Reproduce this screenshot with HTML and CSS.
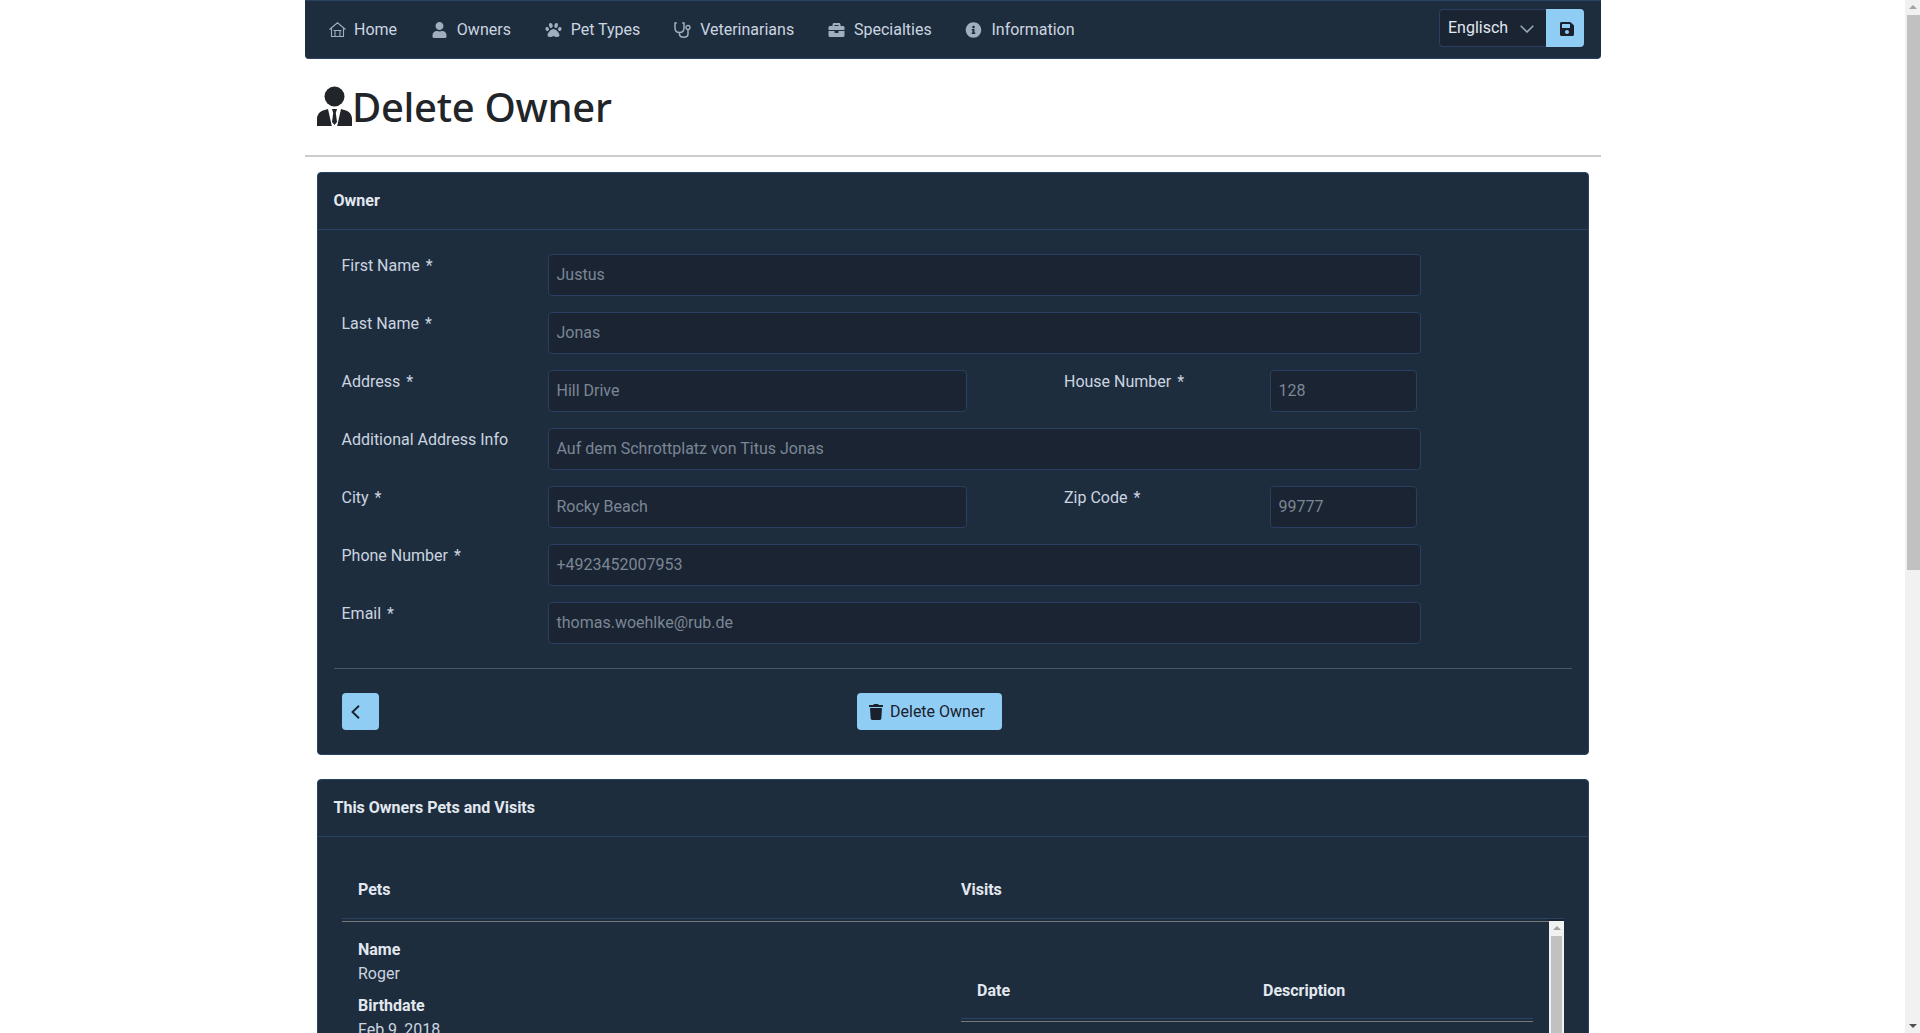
FILE: index.html
```html
<!DOCTYPE html>
<html>
  <head>
    <meta http-equiv="Content-Type" content="text/html;charset=UTF-8">
    <title>Delete Owner</title>
    <link rel="stylesheet" href="styles.css">
  </head>
  <body>
    <div class="container">
      <!-- navbar -->
      <nav class="navbar">
        <ul class="nav-list">
          <li class="nav-item nav-home">
            <svg class="nav-icon" viewBox="0 0 17 15"><path d="M.5 7.500 8.500.8l8 6.700M2.500 6v8.500h12V6M6 14.500v-6h5v6M4.500 8.500h8" fill="none" stroke="currentColor" stroke-width="1.100"/></svg>
            <span>Home</span>
          </li>
          <li class="nav-item nav-owners">
            <svg class="nav-icon" viewBox="0 0 448 512"><path fill="currentColor" d="M224 256c70.7 0 128-57.3 128-128S294.7 0 224 0 96 57.3 96 128s57.3 128 128 128zm89.6 32h-16.7c-22.2 10.2-46.9 16-72.9 16s-50.6-5.8-72.9-16h-16.7C60.2 288 0 348.2 0 422.4V464c0 26.5 21.5 48 48 48h352c26.5 0 48-21.5 48-48v-41.6c0-74.2-60.2-134.4-134.4-134.4z"/></svg>
            <span>Owners</span>
          </li>
          <li class="nav-item nav-pets">
            <svg class="nav-icon" viewBox="0 0 512 512"><path fill="currentColor" d="M256 224c-79.41 0-192 122.76-192 200.25 0 34.9 26.81 55.75 71.74 55.75 48.84 0 81.09-25.08 120.26-25.08 39.51 0 71.85 25.08 120.26 25.08 44.93 0 71.74-20.85 71.74-55.75C448 346.76 335.41 224 256 224zm-147.28-12.61c-10.4-34.65-42.44-57.09-71.56-50.13-29.12 6.96-44.29 40.69-33.89 75.34 10.4 34.65 42.44 57.09 71.56 50.13 29.12-6.96 44.29-40.69 33.89-75.34zm84.72-20.78c30.94-8.14 46.42-49.94 34.58-93.36s-46.52-72.01-77.46-63.87-46.42 49.94-34.58 93.36c11.84 43.42 46.52 72.02 77.46 63.87zm281.39-29.34c-29.12-6.96-61.15 15.48-71.56 50.13-10.4 34.65 4.77 68.38 33.89 75.34 29.12 6.96 61.15-15.48 71.56-50.13 10.4-34.65-4.77-68.38-33.89-75.34zm-156.27 29.34c30.94 8.14 65.62-20.45 77.46-63.87 11.84-43.42-3.64-85.21-34.58-93.36s-65.62 20.45-77.46 63.87c-11.84 43.42 3.64 85.22 34.58 93.36z"/></svg>
            <span>Pet Types</span>
          </li>
          <li class="nav-item nav-vets">
            <svg class="nav-icon" viewBox="0 0 17 16"><path d="M2.800.9H1v5.100c0 2.800 2 4.500 4.500 4.500s4.500-1.700 4.500-4.500V.9H8.200M5.500 10.500V12c0 2 1.700 3.200 4.200 3.200s4.300-1.200 4.300-3.200V7.500" fill="none" stroke="currentColor" stroke-width="1.500"/><circle cx="14" cy="5.500" r="2" fill="none" stroke="currentColor" stroke-width="1.300"/></svg>
            <span>Veterinarians</span>
          </li>
          <li class="nav-item nav-spec">
            <svg class="nav-icon" viewBox="0 0 512 512"><path fill="currentColor" d="M320 336c0 8.84-7.16 16-16 16h-96c-8.84 0-16-7.16-16-16v-48H0v144c0 25.6 22.4 48 48 48h416c25.6 0 48-22.4 48-48V288H320v48zm144-208h-80V80c0-25.6-22.4-48-48-48H176c-25.6 0-48 22.4-48 48v48H48c-25.6 0-48 22.4-48 48v80h512v-80c0-25.6-22.4-48-48-48zm-144 0H192V96h128v32z"/></svg>
            <span>Specialties</span>
          </li>
          <li class="nav-item nav-info">
            <svg class="nav-icon" viewBox="0 0 512 512"><path fill="currentColor" d="M256 8C119.043 8 8 119.083 8 256c0 136.997 111.043 248 248 248s248-111.003 248-248C504 119.083 392.957 8 256 8zm0 110c23.196 0 42 18.804 42 42s-18.804 42-42 42-42-18.804-42-42 18.804-42 42-42zm56 254c0 6.627-5.373 12-12 12h-88c-6.627 0-12-5.373-12-12v-24c0-6.627 5.373-12 12-12h12v-64h-12c-6.627 0-12-5.373-12-12v-24c0-6.627 5.373-12 12-12h64c6.627 0 12 5.373 12 12v100h12c6.627 0 12 5.373 12 12v24z"/></svg>
            <span>Information</span>
          </li>
        </ul>
        <div class="lang">
          <div class="lang-select">
            <span>Englisch</span>
            <svg class="lang-chevron" viewBox="0 0 14 8"><path d="M.7.7 7 7 13.300.7" fill="none" stroke="currentColor" stroke-width="1.500"/></svg>
          </div>
          <div class="btn btn-save">
            <svg class="save-icon" viewBox="0 0 448 512"><path fill="currentColor" d="M433.941 129.941l-83.882-83.882A48 48 0 0 0 316.118 32H48C21.49 32 0 53.49 0 80v352c0 26.51 21.49 48 48 48h352c26.51 0 48-21.49 48-48V163.882a48 48 0 0 0-14.059-33.941zM224 416c-35.346 0-64-28.654-64-64 0-35.346 28.654-64 64-64s64 28.654 64 64c0 35.346-28.654 64-64 64zm96-304.520V212c0 6.627-5.373 12-12 12H76c-6.627 0-12-5.373-12-12V108c0-6.627 5.373-12 12-12h228.520c3.183 0 6.235 1.264 8.485 3.515l3.480 3.480A11.996 11.996 0 0 1 320 111.480z"/></svg>
          </div>
        </div>
      </nav>

      <!-- title -->
      <div class="title">
        <svg class="title-icon" viewBox="0 0 35 40"><circle cx="17.500" cy="10.500" r="10" fill="currentColor"/><path fill="currentColor" d="M0 40v-7c0-4.500 2.800-7.300 6-8.500l5-1.500 3.800 17zM35 40v-7c0-4.500-2.800-7.300-6-8.500L24 23l-3.800 17zM15 23h5l-1.200 4 1.200 9-2.500 3-2.500-3 1.200-9z"/></svg>
        <h1>Delete Owner</h1>
      </div>

      <div class="content">
        <!-- owner card -->
        <section class="card card-owner">
          <div class="card-header">Owner</div>
          <div class="card-body">
            <div class="form-row">
              <label class="form-label">First Name <i>*</i></label>
              <div class="form-control wide">Justus</div>
            </div>
            <div class="form-row">
              <label class="form-label">Last Name <i>*</i></label>
              <div class="form-control wide">Jonas</div>
            </div>
            <div class="form-row">
              <label class="form-label">Address <i>*</i></label>
              <div class="form-control half">Hill Drive</div>
              <label class="form-label second">House Number <i>*</i></label>
              <div class="form-control small">128</div>
            </div>
            <div class="form-row">
              <label class="form-label">Additional Address Info</label>
              <div class="form-control wide">Auf dem Schrottplatz von Titus Jonas</div>
            </div>
            <div class="form-row">
              <label class="form-label">City <i>*</i></label>
              <div class="form-control half">Rocky Beach</div>
              <label class="form-label second">Zip Code <i>*</i></label>
              <div class="form-control small">99777</div>
            </div>
            <div class="form-row">
              <label class="form-label">Phone Number <i>*</i></label>
              <div class="form-control wide">+4923452007953</div>
            </div>
            <div class="form-row">
              <label class="form-label">Email <i>*</i></label>
              <div class="form-control wide">thomas.woehlke@rub.de</div>
            </div>
            <hr class="card-rule">
            <div class="actions">
              <div class="btn btn-back">
                <svg class="back-icon" viewBox="0 0 9 14"><path d="M8 .8 1.500 7 8 13.200" fill="none" stroke="currentColor" stroke-width="1.900"/></svg>
              </div>
              <div class="btn btn-delete">
                <svg class="trash-icon" viewBox="0 0 448 512"><path fill="currentColor" d="M432 32H312l-9.400-18.700A24 24 0 0 0 281.100 0H166.800a23.720 23.720 0 0 0-21.400 13.300L136 32H16A16 16 0 0 0 0 48v32a16 16 0 0 0 16 16h416a16 16 0 0 0 16-16V48a16 16 0 0 0-16-16zM53.200 467a48 48 0 0 0 47.900 45h245.800a48 48 0 0 0 47.900-45L416 128H32z"/></svg>
                <span>Delete Owner</span>
              </div>
            </div>
          </div>
        </section>

        <!-- pets card, runs past the bottom of the window -->
        <section class="card card-pets">
          <div class="card-header">This Owners Pets and Visits</div>
          <div class="card-body pets-body">
            <div class="table-head">
              <div class="col-pets">Pets</div>
              <div class="col-visits">Visits</div>
            </div>
            <div class="table-body">
              <div class="pets-cell">
                <div class="dt">Name</div>
                <div class="dd">Roger</div>
                <div class="dt">Birthdate</div>
                <div class="dd">Feb 9, 2018</div>
              </div>
              <div class="visits-cell">
                <div class="visits-head">
                  <div class="col-date">Date</div>
                  <div class="col-desc">Description</div>
                </div>
              </div>
              <div class="scrollbar inner-scrollbar"><b class="arrow-up"></b><b class="thumb"></b></div>
            </div>
          </div>
        </section>
      </div>
    </div>
    <div class="scrollbar page-scrollbar"><b class="arrow-up"></b><b class="thumb"></b><b class="arrow-down"></b></div>
  </body>
</html>
```

FILE: styles.css
```css
html, body {
  margin: 0;
  height: 100%;
  overflow: hidden;
}
body {
  background: #fff;
  color: #212529;
  font-family: Roboto, "Liberation Sans", sans-serif;
  font-size: 16px;
  line-height: 24px;
}
.container {
  width: 1296px;
  margin-left: 305px;
}

/* navbar */
.navbar {
  height: 59px;
  box-sizing: border-box;
  background: #1e2d3d;
  border-top: 1px solid #2a4365;
  border-bottom: 1px solid #2a4365;
  border-radius: 0 0 4px 4px;
  display: flex;
  justify-content: space-between;
  padding-right: 17px;
}
.nav-list {
  list-style: none;
  margin: 0;
  padding: 0 0 0 24px;
  display: flex;
  align-items: center;
}
.nav-item {
  display: flex;
  align-items: center;
  color: #cbd5e0;
  height: 24px;
  margin-right: 33.8px;
}
.nav-icon {
  height: 16px;
  width: 17px;
  margin-right: 9px;
  color: #a0aec0;
}
.nav-home .nav-icon {
  height: 15px;
  margin-right: 8px;
}
.lang {
  display: flex;
  height: 38px;
  margin-top: 8px;
}
.lang-select {
  width: 107px;
  box-sizing: border-box;
  border: 1px solid #2a3f5f;
  border-right: 0;
  background: #1a2433;
  color: #e2e8f0;
  display: flex;
  align-items: center;
  justify-content: space-between;
  padding: 0 12px 1px 8px;
  border-radius: 4px 0 0 4px;
}
.lang-chevron {
  width: 14px;
  height: 8px;
  color: #a0aec0;
  margin-top: 2px;
}
.btn {
  background: #90cdf4;
  color: #1a202c;
  display: flex;
  align-items: center;
  justify-content: center;
  border-radius: 4px;
  box-sizing: border-box;
  height: 38px;
}
.btn-save {
  width: 38px;
  border-radius: 0 4px 4px 0;
}
.save-icon {
  width: 14px;
  height: 16px;
  margin: 1px 0 0 3px;
}

/* title */
.title {
  display: flex;
  align-items: flex-end;
  height: 98px;
  box-sizing: border-box;
  padding: 0 0 0 12px;
  border-bottom: 2px solid #ccc;
  color: #212529;
}
.title-icon {
  width: 35px;
  height: 40px;
  margin-bottom: 29px;
  flex: none;
}
.title h1 {
  margin: 0 0 24px;
  font-family: "Noto Sans", "Open Sans", sans-serif;
  font-size: 40px;
  font-weight: 500;
  line-height: 48px;
  letter-spacing: -.3px;
}

.content {
  padding: 15px 12px 0;
}

/* cards */
.card {
  background: #1e2d3d;
  border: 1px solid #2a4365;
  border-radius: 4px;
  color: #e2e8f0;
  margin-bottom: 24px;
}
.card-header {
  height: 57px;
  box-sizing: border-box;
  padding: 0 15.5px;
  display: flex;
  align-items: center;
  font-weight: 700;
  border-bottom: 1px solid #2a4365;
}
.card-owner .card-body {
  padding: 24px 16px 24px;
  height: 524px;
  box-sizing: border-box;
}
.form-row {
  display: flex;
  height: 42px;
  margin-bottom: 16px;
}
.form-label {
  width: 198px;
  margin-left: 7.5px;
  margin-right: 8.5px;
  flex: none;
  color: #cbd5e0;
}
.form-label i {
  font-style: normal;
  margin-left: 2px;
}
.form-label.second {
  margin-left: 97px;
  margin-right: 8px;
}
.form-control {
  height: 42px;
  box-sizing: border-box;
  background: #1a2433;
  border: 1px solid #2a3f5f;
  border-radius: 4px;
  color: #7b8794;
  padding: 8px 8px 8px 7.5px;
  flex: none;
}
.form-control.wide {
  width: 873px;
}
.form-control.half {
  width: 419px;
}
.form-control.small {
  width: 147px;
}
.card-rule {
  margin: 24px 0;
  border: 0;
  border-top: 1px solid #4a5568;
}
.actions {
  display: flex;
  padding-left: 8px;
}
.btn-back {
  width: 37px;
  height: 37px;
  margin-right: 478px;
  justify-content: flex-start;
  padding-left: 9px;
}
.back-icon {
  width: 9px;
  height: 14px;
}
.btn-delete {
  width: 145px;
  height: 37px;
  justify-content: flex-start;
  padding-left: 12px;
}
.trash-icon {
  width: 14px;
  height: 16px;
  margin-right: 7px;
}

/* pets and visits */
.pets-body {
  padding: 24px 24px 0;
}
.table-head {
  display: flex;
  height: 57px;
  align-items: center;
  font-weight: 700;
  border-bottom: 1px solid #2a4365;
}
.col-pets {
  width: 619px;
  padding-left: 16px;
  box-sizing: border-box;
}
.table-body {
  position: relative;
  display: flex;
  height: 400px;
  margin-top: 2px;
}
.table-body::before {
  content: "";
  position: absolute;
  left: 0;
  right: 15px;
  top: 0;
  border-top: 1px solid #777;
}
.pets-cell {
  width: 619px;
  box-sizing: border-box;
  padding: 17px 16px;
}
.dt {
  font-weight: 700;
}
.dd {
  margin-bottom: 8px;
  color: #cbd5e0;
}
.visits-cell {
  width: 572px;
}
.visits-head {
  display: flex;
  height: 98px;
  box-sizing: border-box;
  padding-bottom: 15px;
  font-weight: 700;
  align-items: flex-end;
  border-bottom: 1px solid #2a4365;
  position: relative;
}
.visits-head::after {
  content: "";
  position: absolute;
  left: 0;
  right: 0;
  bottom: -4px;
  border-top: 1px solid #777;
}
.col-date {
  width: 286px;
  padding-left: 16px;
  box-sizing: border-box;
}
.col-desc {
  padding-left: 16px;
}

/* fake scrollbars, the window has none of its own */
.scrollbar {
  position: absolute;
  top: 0;
  right: 0;
  width: 15px;
  background: #f1f1f1;
}
.page-scrollbar {
  position: fixed;
  height: 100%;
}
.inner-scrollbar {
  height: 100%;
}
.inner-scrollbar::before {
  content: "";
  position: absolute;
  left: 0;
  right: 0;
  top: -2px;
  height: 2px;
  background: #1a2332;
}
.thumb {
  position: absolute;
  left: 2px;
  right: 0;
  top: 15px;
  background: #c1c1c1;
}
.page-scrollbar .thumb {
  height: 555px;
}
.inner-scrollbar .thumb {
  right: 2px;
  bottom: 0;
}
.arrow-up, .arrow-down {
  position: absolute;
  left: 4px;
  width: 0;
  height: 0;
  border-left: 4px solid transparent;
  border-right: 4px solid transparent;
}
.arrow-up {
  top: 5px;
  border-bottom: 4px solid #a3a3a3;
}
.arrow-down {
  bottom: 5px;
  border-top: 4px solid #505050;
}
```
